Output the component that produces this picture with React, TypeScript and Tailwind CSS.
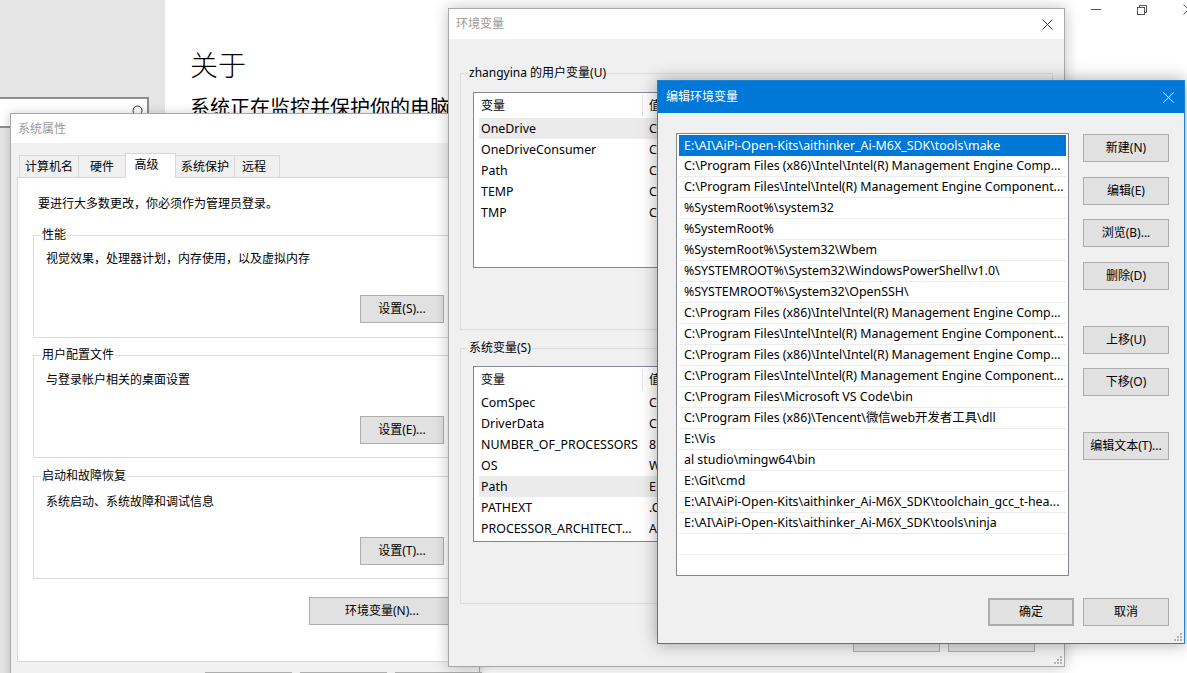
import React from "react";

type Kids = { children?: React.ReactNode; className?: string };

function Btn({ children, className = "" }: Kids) {
  return (
    <div
      className={
        "flex shrink-0 items-center justify-center border border-[#adadad] bg-[#e1e1e1] text-[12px] leading-[16px] text-black " +
        className
      }
    >
      {children}
    </div>
  );
}

function Grip({ className = "" }: { className?: string }) {
  return (
    <svg width="8" height="8" viewBox="0 0 8 8" className={className}>
      <rect x="6" y="0" width="2" height="2" fill="#b4b4b4" />
      <rect x="3" y="3" width="2" height="2" fill="#b4b4b4" />
      <rect x="6" y="3" width="2" height="2" fill="#b4b4b4" />
      <rect x="0" y="6" width="2" height="2" fill="#b4b4b4" />
      <rect x="3" y="6" width="2" height="2" fill="#b4b4b4" />
      <rect x="6" y="6" width="2" height="2" fill="#b4b4b4" />
    </svg>
  );
}

function CloseX({ color }: { color: string }) {
  return (
    <svg width="11" height="11" viewBox="0 0 11 11">
      <path d="M0.5 0.5 L10.5 10.5 M10.5 0.5 L0.5 10.5" stroke={color} strokeWidth="1" fill="none" />
    </svg>
  );
}

function Group({
  label,
  labelBg,
  className = "",
  children,
}: {
  label: string;
  labelBg: string;
  className?: string;
  children?: React.ReactNode;
}) {
  return (
    <div className={"relative shrink-0 border border-[#dcdcdc] " + className}>
      <span className={"absolute -top-[9px] left-[7px] px-[1px] text-[12px] leading-[16px] " + labelBg}>{label}</span>
      {children}
    </div>
  );
}

function VarList({
  rows,
  highlight,
  className = "",
}: {
  rows: [string, string][];
  highlight: number;
  className?: string;
}) {
  return (
    <div className={"shrink-0 overflow-hidden border border-[#828790] bg-white text-[12.4px] " + className}>
      <div className="flex h-[25px] items-center text-[12px]">
        <div className="w-[168px] shrink-0 pl-[7px]">变量</div>
        <div className="h-[21px] w-px shrink-0 bg-[#e5e5e5]" />
        <div className="pl-[6px]">值</div>
      </div>
      {rows.map(([k, v], i) => (
        <div
          key={i}
          className={
            "ml-[5px] flex h-[21px] items-center whitespace-nowrap " + (i === highlight ? "bg-[#ebebeb]" : "")
          }
        >
          <div className="w-[170px] shrink-0 overflow-hidden pl-[2px]">{k}</div>
          <div className="shrink-0">{v}</div>
        </div>
      ))}
    </div>
  );
}

const userVars: [string, string][] = [
  ["OneDrive", "C"],
  ["OneDriveConsumer", "C"],
  ["Path", "C"],
  ["TEMP", "C"],
  ["TMP", "C"],
];

const sysVars: [string, string][] = [
  ["ComSpec", "C"],
  ["DriverData", "C"],
  ["NUMBER_OF_PROCESSORS", "8"],
  ["OS", "W"],
  ["Path", "E"],
  ["PATHEXT", ".C"],
  ["PROCESSOR_ARCHITECT...", "A"],
];

const paths: string[] = [
  "E:\\AI\\AiPi-Open-Kits\\aithinker_Ai-M6X_SDK\\tools\\make",
  "C:\\Program Files (x86)\\Intel\\Intel(R) Management Engine Comp...",
  "C:\\Program Files\\Intel\\Intel(R) Management Engine Component...",
  "%SystemRoot%\\system32",
  "%SystemRoot%",
  "%SystemRoot%\\System32\\Wbem",
  "%SYSTEMROOT%\\System32\\WindowsPowerShell\\v1.0\\",
  "%SYSTEMROOT%\\System32\\OpenSSH\\",
  "C:\\Program Files (x86)\\Intel\\Intel(R) Management Engine Comp...",
  "C:\\Program Files\\Intel\\Intel(R) Management Engine Component...",
  "C:\\Program Files (x86)\\Intel\\Intel(R) Management Engine Comp...",
  "C:\\Program Files\\Intel\\Intel(R) Management Engine Component...",
  "C:\\Program Files\\Microsoft VS Code\\bin",
  "C:\\Program Files (x86)\\Tencent\\微信web开发者工具\\dll",
  "E:\\Vis",
  "al studio\\mingw64\\bin",
  "E:\\Git\\cmd",
  "E:\\AI\\AiPi-Open-Kits\\aithinker_Ai-M6X_SDK\\toolchain_gcc_t-hea...",
  "E:\\AI\\AiPi-Open-Kits\\aithinker_Ai-M6X_SDK\\tools\\ninja",
  "",
  "",
];

export default function App() {
  return (
    <div className="relative h-[673px] w-[1187px] overflow-hidden font-['Noto_Sans','Noto_Sans_CJK_SC',sans-serif] text-[12px] leading-[16px] text-black">
      {/* Settings window background */}
      <div className="flex h-full w-full">
        <div className="flex w-[165px] shrink-0 flex-col bg-[#e6e6e6]">
          <div className="-ml-[2px] mt-[97px] flex h-[31px] w-[151px] items-start justify-end border-2 border-[#8e8e8e] bg-white pr-[4px] pt-[6px]">
            <svg width="14" height="14" viewBox="0 0 14 14">
              <circle cx="8.5" cy="5.5" r="4.5" stroke="#333" strokeWidth="1" fill="none" />
              <path d="M5.3 8.7 L1 13" stroke="#333" strokeWidth="1.2" />
            </svg>
          </div>
        </div>
        <div className="flex flex-1 flex-col bg-white">
          <div className="flex h-[30px] justify-end">
            <div className="mr-[-24px] flex">
              <div className="flex w-[46px] justify-center pt-[9px]">
                <div className="h-px w-[10px] bg-[#555]" />
              </div>
              <div className="flex w-[46px] justify-center pt-[5px]">
                <svg width="10" height="10" viewBox="0 0 10 10">
                  <path d="M2.5 2.5 V0.5 H9.5 V7.5 H7.5" stroke="#555" fill="none" />
                  <rect x="0.5" y="2.5" width="7" height="7" stroke="#555" fill="none" />
                </svg>
              </div>
              <div className="flex w-[46px] justify-center pt-[4px]">
                <CloseX color="#555" />
              </div>
            </div>
          </div>
          <div className="pl-[25px] pt-[17px]">
            <div className="text-[28px] leading-[36px] font-light">关于</div>
            <div className="mt-[11px] whitespace-nowrap text-[20px] leading-[28px]">系统正在监控并保护你的电脑。</div>
          </div>
        </div>
      </div>

      {/* 系统属性 window */}
      <div className="absolute left-[10px] top-[113px] h-[600px] w-[470px] border border-[#a8a8a8] bg-[#f0f0f0] shadow-[0_0_10px_rgba(0,0,0,0.2)]">
        <div className="flex h-[29px] items-center bg-white pl-[7px] text-[#9a9a9a]">系统属性</div>
        <div className="px-[6px] pt-[10px]">
          <div className="flex h-[24px] items-end pl-[2px]">
            <div className="flex h-[22px] w-[59px] items-center justify-center border-l border-t border-[#d9d9d9]">计算机名</div>
            <div className="flex h-[22px] w-[47px] items-center justify-center border-l border-t border-[#d9d9d9]">硬件</div>
            <div className="relative z-10 -mb-px flex h-[25px] w-[51px] items-start justify-center border-l border-r border-t border-[#d9d9d9] bg-white pt-[3px] pr-[8px]">高级</div>
            <div className="flex h-[22px] w-[58px] items-center justify-center border-t border-[#d9d9d9]">系统保护</div>
            <div className="flex h-[22px] w-[46px] items-center justify-center border-l border-r border-t border-[#d9d9d9] pr-[6px]">远程</div>
          </div>
          <div className="flex h-[485px] flex-col border border-[#d9d9d9] bg-white">
            <div className="ml-[20px] mt-[18px]">要进行大多数更改，你必须作为管理员登录。</div>
            <Group label="性能" labelBg="bg-white" className="ml-[15px] mt-[23px] flex h-[103px] w-[420px] flex-col">
              <div className="ml-[12px] mt-[15px]">视觉效果，处理器计划，内存使用，以及虚拟内存</div>
              <Btn className="ml-[326px] mt-[28px] h-[28px] w-[84px]">设置(S)...</Btn>
            </Group>
            <Group label="用户配置文件" labelBg="bg-white" className="ml-[15px] mt-[17px] flex h-[103px] w-[420px] flex-col">
              <div className="ml-[12px] mt-[16px]">与登录帐户相关的桌面设置</div>
              <Btn className="ml-[326px] mt-[28px] h-[28px] w-[84px]">设置(E)...</Btn>
            </Group>
            <Group label="启动和故障恢复" labelBg="bg-white" className="ml-[15px] mt-[18px] flex h-[103px] w-[420px] flex-col">
              <div className="ml-[12px] mt-[17px]">系统启动、系统故障和调试信息</div>
              <Btn className="ml-[326px] mt-[27px] h-[28px] w-[84px]">设置(T)...</Btn>
            </Group>
            <Btn className="ml-[291px] mt-[18px] h-[28px] w-[146px]">环境变量(N)...</Btn>
          </div>
          <div className="ml-[188px] mt-[10px] flex gap-[8px]">
            <Btn className="h-[28px] w-[87px]" />
            <Btn className="h-[28px] w-[87px]" />
            <Btn className="h-[28px] w-[87px]" />
          </div>
        </div>
      </div>

      {/* 环境变量 window */}
      <div className="absolute left-[448px] top-[8px] flex h-[659px] w-[617px] flex-col border border-[#a8a8a8] bg-[#f0f0f0] shadow-[0_0_14px_rgba(0,0,0,0.25)]">
        <div className="flex h-[30px] shrink-0 items-center justify-between bg-white pl-[7px] pr-[11px] text-[#9a9a9a]">
          <span>环境变量</span>
          <CloseX color="#333" />
        </div>
        <Group label="zhangyina 的用户变量(U)" labelBg="bg-[#f0f0f0]" className="ml-[11px] mt-[34px] h-[257px] w-[593px]">
          <VarList rows={userVars} highlight={0} className="ml-[12px] mt-[18px] h-[176px] w-[567px]" />
        </Group>
        <Group label="系统变量(S)" labelBg="bg-[#f0f0f0]" className="ml-[11px] mt-[18px] h-[256px] w-[593px]">
          <VarList rows={sysVars} highlight={4} className="ml-[12px] mt-[17px] h-[176px] w-[567px]" />
        </Group>
        <div className="ml-[404px] mt-[20px] flex gap-[8px]">
          <Btn className="h-[28px] w-[87px]" />
          <Btn className="h-[28px] w-[87px]" />
        </div>
        <div className="mt-auto flex justify-end pb-[2px] pr-[2px]">
          <Grip />
        </div>
      </div>

      {/* 编辑环境变量 window */}
      <div className="absolute left-[657px] top-[80px] flex h-[564px] w-[528px] flex-col border border-[#1a83d8] bg-[#f0f0f0] shadow-[0_0_16px_rgba(0,0,0,0.35)]">
        <div className="flex h-[32px] shrink-0 items-center justify-between bg-[#0078d7] pl-[8px] pr-[10px] text-white">
          <span>编辑环境变量</span>
          <CloseX color="#ffffff" />
        </div>
        <div className="ml-[18px] mt-[20px] flex">
          <div className="h-[443px] w-[393px] shrink-0 overflow-hidden border border-[#828790] bg-white px-[1px] pt-[1px] text-[12.4px]">
            {paths.map((p, i) => (
              <div
                key={i}
                className={
                  "ml-[1px] flex h-[21px] items-center overflow-hidden whitespace-nowrap pl-[5px] " +
                  (i === 0 ? "mr-[1px] bg-[#0078d7] text-white" : "border-b border-[#ececec]")
                }
              >
                {p}
              </div>
            ))}
          </div>
          <div className="ml-[14px] flex flex-col">
            <Btn className="mt-px h-[28px] w-[86px]">新建(N)</Btn>
            <Btn className="mt-[15px] h-[28px] w-[86px]">编辑(E)</Btn>
            <Btn className="mt-[14px] h-[28px] w-[86px]">浏览(B)...</Btn>
            <Btn className="mt-[15px] h-[28px] w-[86px]">删除(D)</Btn>
            <Btn className="mt-[36px] h-[28px] w-[86px]">上移(U)</Btn>
            <Btn className="mt-[14px] h-[28px] w-[86px]">下移(O)</Btn>
            <Btn className="mt-[36px] h-[28px] w-[86px]">编辑文本(T)...</Btn>
          </div>
        </div>
        <div className="ml-[330px] mt-[22px] flex gap-[9px]">
          <Btn className="h-[28px] w-[86px] border-2 border-[#0078d7]">确定</Btn>
          <Btn className="h-[28px] w-[86px]">取消</Btn>
        </div>
        <div className="mt-auto flex justify-end pb-[2px] pr-[2px]">
          <Grip />
        </div>
      </div>
    </div>
  );
}
